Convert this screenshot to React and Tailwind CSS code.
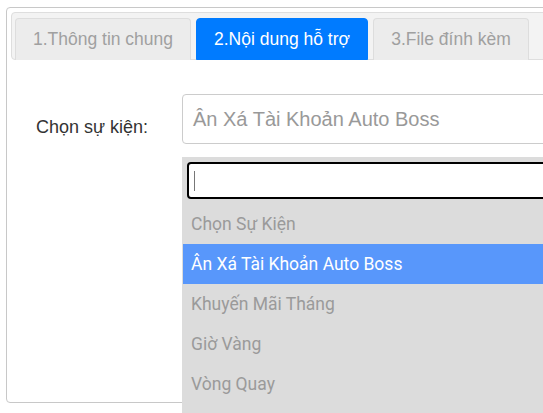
import React from 'react';

const tabs = [
  { label: '1.Thông tin chung', width: 'w-[176px]', active: false },
  { label: '2.Nội dung hỗ trợ', width: 'w-[172px]', active: true },
  { label: '3.File đính kèm', width: 'w-[156px]', active: false },
];

const options = ['Chọn Sự Kiện', 'Ân Xá Tài Khoản Auto Boss', 'Khuyến Mãi Tháng', 'Giờ Vàng', 'Vòng Quay'];

export default function App() {
  return (
    <div className="relative w-[543px] h-[413px] overflow-hidden bg-white font-['Liberation_Sans',Arial,sans-serif]">
      <div className="ml-[6px] mt-[7px] w-[560px] h-[396px] border border-[#c8c8c8] rounded-[4px] pt-[4px] pl-[4px]">
        {/* tab bar */}
        <div className="flex gap-[5px] h-[48px] w-[560px] pt-[5px] pl-[3px] bg-[#f3f3f3] border border-[#dedede] rounded-[4px]">
          {tabs.map((t) => (
            <div
              key={t.label}
              className={
                t.active
                  ? `${t.width} shrink-0 h-[42px] flex items-center justify-center rounded-t-[4px] bg-[#007bff] border border-[#007bff] text-white text-[17.5px]`
                  : `${t.width} shrink-0 h-[42px] flex items-center justify-center rounded-t-[4px] bg-[#ececec] border border-[#dddddd] border-b-0 text-[#a0a0a0] text-[17.5px]`
              }
            >
              {t.label}
            </div>
          ))}
        </div>

        {/* form row */}
        <div className="flex mt-[34px]">
          <div className="w-[171px] shrink-0 pl-[25px] pt-[20px] text-[18px] text-[#333]">Chọn sự kiện:</div>
          <div className="w-[400px] shrink-0 h-[50px] border border-[#cccccc] rounded-[4px] flex items-center pl-[10px] text-[20px] text-[#999]">
            Ân Xá Tài Khoản Auto Boss
          </div>
        </div>
      </div>

      {/* open dropdown */}
      <div className="absolute left-[182px] top-[157px] w-[380px] h-[260px] bg-[#dcdcdc] font-['Roboto',sans-serif]">
        <div className="mx-[5px] mt-[5px] h-[37px] border-2 border-black rounded-[4px] bg-white flex items-center pl-[5px]">
          <div className="w-px h-[20px] bg-[#777]" />
        </div>
        <div className="mt-[5px] ml-[1px]">
          {options.map((o, i) => (
            <div
              key={o}
              className={
                i === 1
                  ? 'h-[40px] flex items-center pl-[8px] text-[17.5px] bg-[#5897fb] text-white'
                  : 'h-[40px] flex items-center pl-[8px] text-[17.5px] text-[#9a9a9a]'
              }
            >
              {o}
            </div>
          ))}
        </div>
      </div>
    </div>
  );
}
